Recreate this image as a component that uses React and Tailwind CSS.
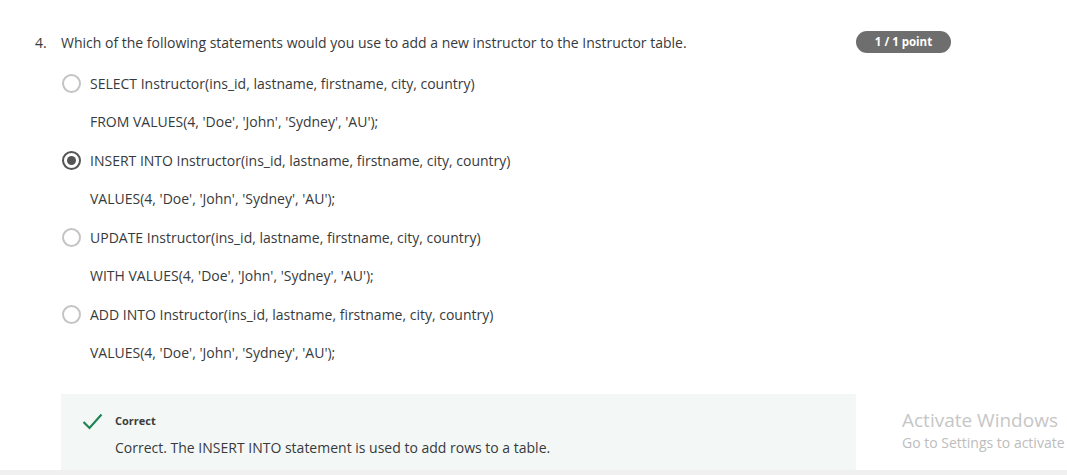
import React from "react";

const options = [
  {
    first: "SELECT Instructor(ins_id, lastname, firstname, city, country)",
    second: "FROM VALUES(4, 'Doe', 'John', 'Sydney', 'AU');",
    selected: false,
  },
  {
    first: "INSERT INTO Instructor(ins_id, lastname, firstname, city, country)",
    second: "VALUES(4, 'Doe', 'John', 'Sydney', 'AU');",
    selected: true,
  },
  {
    first: "UPDATE Instructor(ins_id, lastname, firstname, city, country)",
    second: "WITH VALUES(4, 'Doe', 'John', 'Sydney', 'AU');",
    selected: false,
  },
  {
    first: "ADD INTO Instructor(ins_id, lastname, firstname, city, country)",
    second: "VALUES(4, 'Doe', 'John', 'Sydney', 'AU');",
    selected: false,
  },
];

function Radio({ checked }) {
  return (
    <span
      className={
        "w-[19px] h-[19px] rounded-full border-2 flex items-center justify-center shrink-0 " +
        (checked ? "border-[#555555]" : "border-[#c4c4c4]")
      }
    >
      {checked && <span className="w-[9px] h-[9px] rounded-full bg-[#555555]" />}
    </span>
  );
}

export default function App() {
  return (
    <div
      className="relative w-[1067px] h-[475px] overflow-hidden bg-white text-[#373a3c] flex flex-col"
      style={{ fontFamily: '"Open Sans", "Liberation Sans", sans-serif' }}
    >
      <div className="flex-1 pt-[31px] pl-[35px]">
        {/* question header */}
        <div className="flex items-center h-[22px] w-[916px]">
          <span className="w-[26px] text-[14px]">4.</span>
          <p className="flex-1 text-[14px]">
            Which of the following statements would you use to add a new instructor to the Instructor table.
          </p>
          <span className="h-[22px] w-[95px] rounded-full bg-[#6e6e6e] text-white text-[11.5px] font-bold flex items-center justify-center">
            1 / 1 point
          </span>
        </div>

        {/* answers */}
        <div className="mt-[11px] pl-[27px]">
          {options.map((o, i) => (
            <div key={i}>
              <div className="h-[38px] flex items-center gap-[9px]">
                <Radio checked={o.selected} />
                <span className="text-[14px]">{o.first}</span>
              </div>
              <div className="h-[39px] flex items-center pl-[28px] text-[14px]">{o.second}</div>
            </div>
          ))}
        </div>

        {/* feedback */}
        <div className="mt-[22px] ml-[26px] w-[795px] h-[76px] bg-[#f3f8f6] pl-[21px] pt-[18px]">
          <div className="flex items-center gap-[12px] h-[18px]">
            <svg width="21" height="17" viewBox="0 0 21 17" fill="none">
              <path d="M1.5 9 L7.5 15 L19.5 1.5" stroke="#1f8354" strokeWidth="2.2" />
            </svg>
            <span className="text-[11px] font-bold text-[#3c3c3c]">Correct</span>
          </div>
          <p className="mt-[7px] pl-[33px] text-[14px]">
            Correct. The INSERT INTO statement is used to add rows to a table.
          </p>
        </div>
      </div>
      <div className="h-[5px] bg-[#f0f0f0] shrink-0" />

      {/* activation watermark */}
      <div className="absolute left-[902px] top-[408px] whitespace-nowrap pointer-events-none">
        <div className="text-[19px] leading-[25px] text-[#c6c6c6]">Activate Windows</div>
        <div className="text-[14px] leading-[20px] text-[#bdbdbd]">Go to Settings to activate</div>
      </div>
    </div>
  );
}
